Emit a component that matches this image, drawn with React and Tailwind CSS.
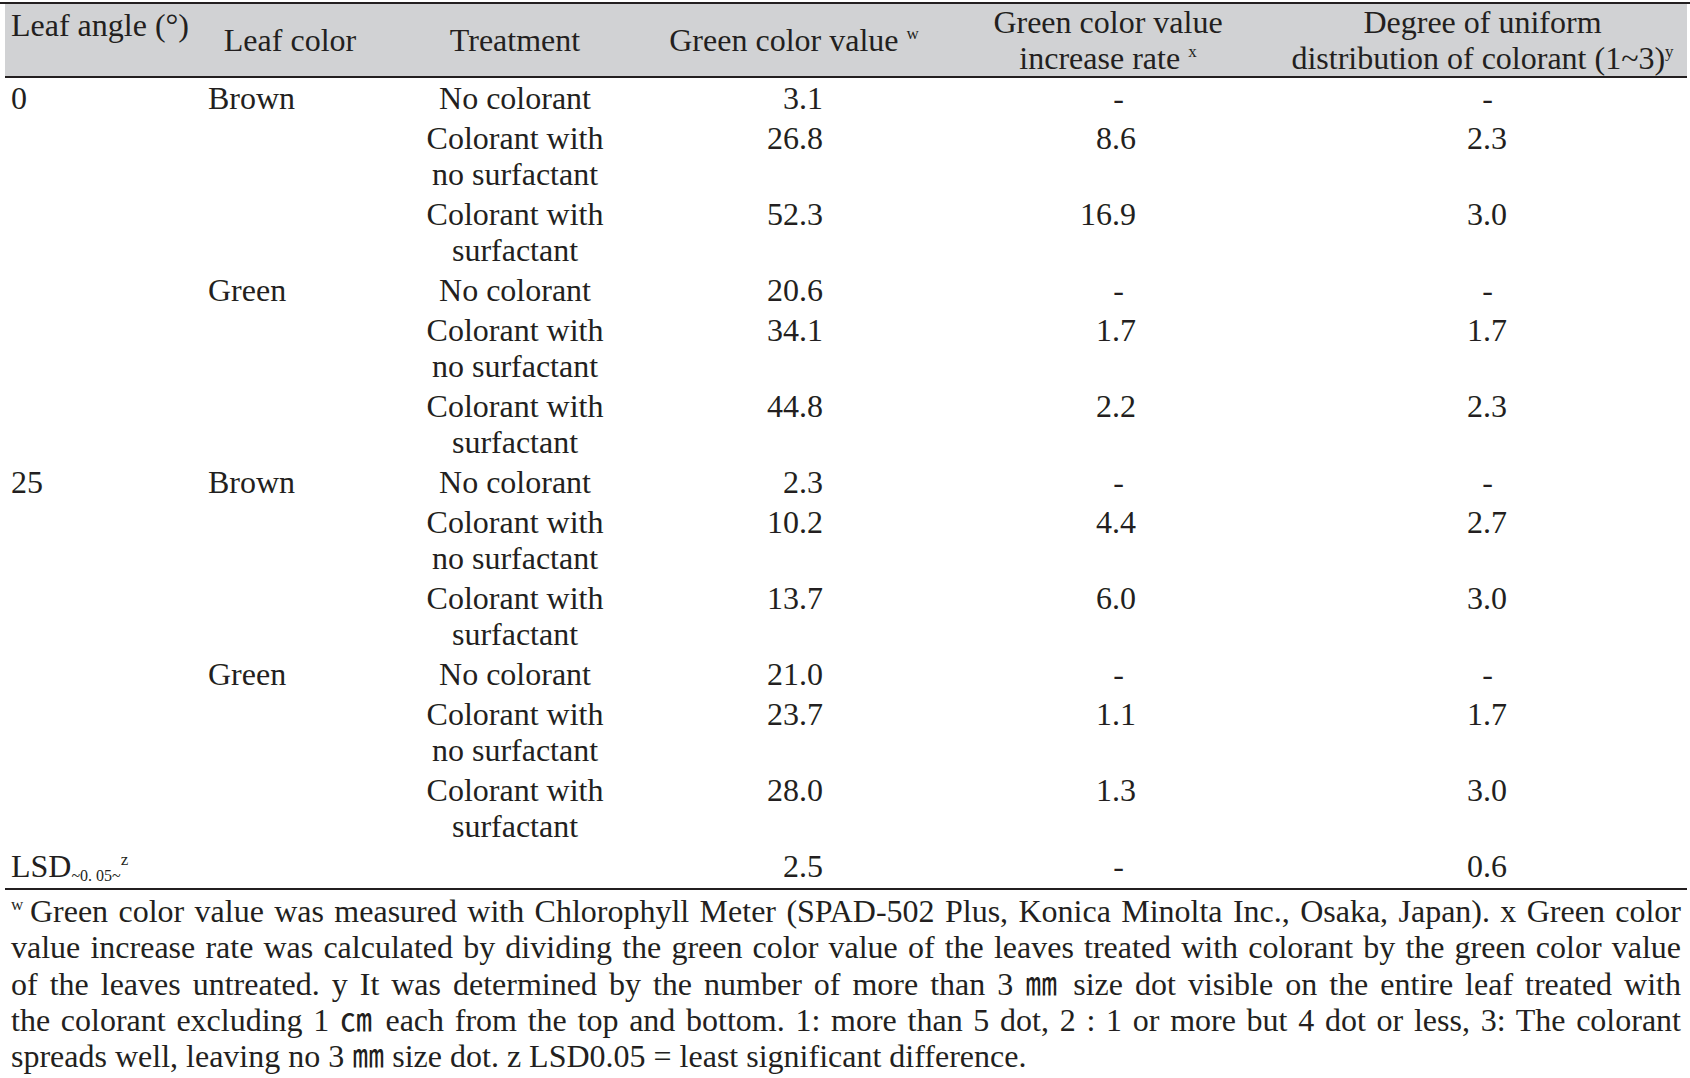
const rows = [
  { angle: "0", color: "Brown", treat: ["No colorant"], g: "3.1", r: "-", d: "-" },
  { treat: ["Colorant with", "no surfactant"], g: "26.8", r: "8.6", d: "2.3" },
  { treat: ["Colorant with", "surfactant"], g: "52.3", r: "16.9", d: "3.0" },
  { color: "Green", treat: ["No colorant"], g: "20.6", r: "-", d: "-" },
  { treat: ["Colorant with", "no surfactant"], g: "34.1", r: "1.7", d: "1.7" },
  { treat: ["Colorant with", "surfactant"], g: "44.8", r: "2.2", d: "2.3" },
  { angle: "25", color: "Brown", treat: ["No colorant"], g: "2.3", r: "-", d: "-" },
  { treat: ["Colorant with", "no surfactant"], g: "10.2", r: "4.4", d: "2.7" },
  { treat: ["Colorant with", "surfactant"], g: "13.7", r: "6.0", d: "3.0" },
  { color: "Green", treat: ["No colorant"], g: "21.0", r: "-", d: "-" },
  { treat: ["Colorant with", "no surfactant"], g: "23.7", r: "1.1", d: "1.7" },
  { treat: ["Colorant with", "surfactant"], g: "28.0", r: "1.3", d: "3.0" },
];

const notes = [
  "Green color value was measured with Chlorophyll Meter (SPAD-502 Plus, Konica Minolta Inc., Osaka, Japan). x Green color",
  "value increase rate was calculated by dividing the green color value of the leaves treated with colorant by the green color value",
  "of the leaves untreated. y It was determined by the number of more than 3 ㎜ size dot visible on the entire leaf treated with",
  "the colorant excluding 1 ㎝ each from the top and bottom. 1: more than 5 dot, 2 : 1 or more but 4 dot or less, 3: The colorant",
];

const App = () => {
  return (
    <div className="w-[1690px] bg-white text-[#231f20] font-['Liberation_Serif','Noto_Sans_CJK_KR',serif] text-[32px]">
      <div className="h-[2px] mt-[2px] bg-[#231f20]"></div>
      <div className="pl-[5px] pr-[3px]">
        <table className="w-full table-fixed border-collapse">
          <colgroup>
            <col className="w-[195px]" />
            <col className="w-[180px]" />
            <col className="w-[270px]" />
            <col className="w-[288px]" />
            <col className="w-[340px]" />
            <col />
          </colgroup>
          <thead>
            <tr className="bg-[#d1d2d4] border-b-2 border-[#231f20] h-[73px] leading-[36px] font-normal">
              <th className="align-top text-left pl-[6px] pt-[3px] font-normal whitespace-nowrap">Leaf angle (°)</th>
              <th className="align-middle text-center font-normal">Leaf color</th>
              <th className="align-middle text-center font-normal">Treatment</th>
              <th className="align-middle text-center font-normal whitespace-nowrap">
                Green color value <sup className="text-[17px] -top-[12px] relative align-baseline">w</sup>
              </th>
              <th className="align-middle text-center font-normal">
                Green color value
                <br />
                increase rate <sup className="text-[17px] -top-[12px] relative align-baseline">x</sup>
              </th>
              <th className="align-middle text-center font-normal">
                Degree of uniform
                <br />
                <span className="whitespace-nowrap">
                  distribution of colorant (1~3)<sup className="text-[17px] -top-[12px] relative align-baseline">y</sup>
                </span>
              </th>
            </tr>
          </thead>
          <tbody className="leading-[36px]">
            {rows.map((row, i) => (
              <tr key={i}>
                <td className="align-top py-[2px] pl-[6px]">{row.angle}</td>
                <td className="align-top py-[2px] pl-[8px]">{row.color}</td>
                <td className="align-top py-[2px] text-center">
                  {row.treat.map((t, j) => (
                    <div key={j}>{t}</div>
                  ))}
                </td>
                <td className="align-top py-[2px] text-right pr-[115px]">{row.g}</td>
                <td className={row.r === "-" ? "align-top py-[2px] text-right pr-[154px]" : "align-top py-[2px] text-right pr-[142px]"}>{row.r}</td>
                <td className={row.d === "-" ? "align-top py-[2px] text-right pr-[194px]" : "align-top py-[2px] text-right pr-[180px]"}>{row.d}</td>
              </tr>
            ))}
            <tr className="border-b-2 border-[#231f20]">
              <td className="align-top pt-[2px] pb-[4px] pl-[6px] whitespace-nowrap">
                LSD<sub className="text-[16px] relative top-[4px] align-baseline">~0. 05~</sub>
                <sup className="text-[17px] -top-[12px] relative align-baseline">z</sup>
              </td>
              <td></td>
              <td></td>
              <td className="align-top pt-[2px] pb-[4px] text-right pr-[115px]">2.5</td>
              <td className="align-top pt-[2px] pb-[4px] text-right pr-[154px]">-</td>
              <td className="align-top pt-[2px] pb-[4px] text-right pr-[180px]">0.6</td>
            </tr>
          </tbody>
        </table>
        <div className="pt-[3px] px-[6px] leading-[36.25px]">
          {notes.map((line, i) => (
            <div key={i} className="whitespace-nowrap text-justify [text-align-last:justify]">
              {i === 0 && <sup className="text-[17px] -top-[12px] relative align-baseline">w </sup>}
              {line}
            </div>
          ))}
          <div className="whitespace-nowrap">spreads well, leaving no 3 ㎜ size dot. z LSD0.05 = least significant difference.</div>
        </div>
      </div>
    </div>
  );
};

export default App;
